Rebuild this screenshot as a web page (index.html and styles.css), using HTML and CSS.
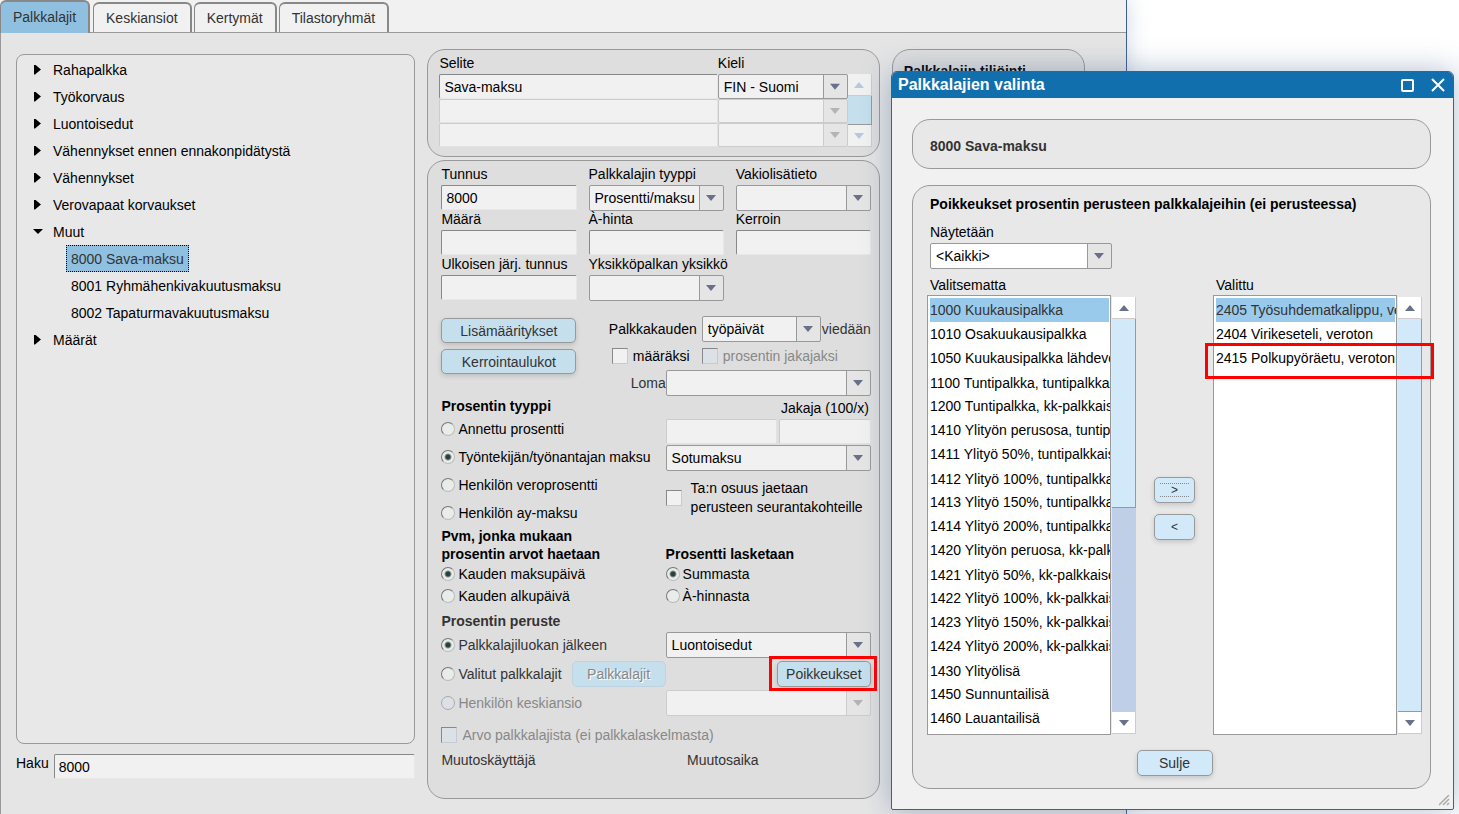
FILE: index.html
```html
<!DOCTYPE html>
<html lang="fi">
  <head>
    <meta charset="UTF-8" />
    <meta name="viewport" content="width=device-width, initial-scale=1.0" />
    <title>Palkkalajit</title>
    <link rel="stylesheet" href="styles.css">
  </head>
  <body>
    <main class="window">
      <nav class="tabs">
        <button class="tab active">Palkkalajit</button>
        <button class="tab">Keskiansiot</button>
        <button class="tab">Kertymät</button>
        <button class="tab">Tilastoryhmät</button>
      </nav>

      <div class="content">
        <section class="tree-col">
          <ul class="tree">
            <li><button class="node">Rahapalkka</button></li>
            <li><button class="node">Työkorvaus</button></li>
            <li><button class="node">Luontoisedut</button></li>
            <li><button class="node">Vähennykset ennen ennakonpidätystä</button></li>
            <li><button class="node">Vähennykset</button></li>
            <li><button class="node">Verovapaat korvaukset</button></li>
            <li>
              <button class="node open">Muut</button>
              <ul>
                <li><button class="leaf selected">8000 Sava-maksu</button></li>
                <li><button class="leaf">8001 Ryhmähenkivakuutusmaksu</button></li>
                <li><button class="leaf">8002 Tapaturmavakuutusmaksu</button></li>
              </ul>
            </li>
            <li><button class="node">Määrät</button></li>
          </ul>
          <div class="search">
            <label for="haku">Haku</label>
            <input type="text" id="haku" value="8000" />
          </div>
        </section>

        <section class="form-col">
          <div class="panel names">
            <label for="selite1">Selite</label>
            <label for="kieli1">Kieli</label>
            <span></span>
            <input type="text" id="selite1" value="Sava-maksu" />
            <select id="kieli1"><option>FIN - Suomi</option></select>
            <div class="scrollbar off">
              <button class="up" aria-label="Ylös" disabled></button>
              <div class="thumb"></div>
              <button class="down" aria-label="Alas" disabled></button>
            </div>
            <input type="text" aria-label="Selite 2" disabled />
            <select aria-label="Kieli 2" disabled></select>
            <input type="text" aria-label="Selite 3" disabled />
            <select aria-label="Kieli 3" disabled></select>
          </div>

          <form class="panel details">
            <div class="fields">
              <div class="field">
                <label for="tunnus">Tunnus</label>
                <input type="text" id="tunnus" value="8000" />
              </div>
              <div class="field">
                <label for="tyyppi">Palkkalajin tyyppi</label>
                <select id="tyyppi"><option>Prosentti/maksu</option></select>
              </div>
              <div class="field">
                <label for="vakio">Vakiolisätieto</label>
                <select id="vakio"></select>
              </div>
              <div class="field">
                <label for="maara">Määrä</label>
                <input type="text" id="maara" />
              </div>
              <div class="field">
                <label for="ahinta">À-hinta</label>
                <input type="text" id="ahinta" />
              </div>
              <div class="field">
                <label for="kerroin">Kerroin</label>
                <input type="text" id="kerroin" />
              </div>
              <div class="field">
                <label for="ulkoinen">Ulkoisen järj. tunnus</label>
                <input type="text" id="ulkoinen" />
              </div>
              <div class="field">
                <label for="yksikko">Yksikköpalkan yksikkö</label>
                <select id="yksikko"></select>
              </div>
            </div>

            <div class="period">
              <div class="actions">
                <button type="button" class="btn">Lisämääritykset</button>
                <button type="button" class="btn">Kerrointaulukot</button>
              </div>
              <div class="period-fields">
                <label for="kausi">Palkkakauden</label>
                <div class="line">
                  <select id="kausi"><option>työpäivät</option></select>
                  <span class="soft">viedään</span>
                </div>
                <label class="check"><input type="checkbox" /> määräksi</label>
                <label class="check muted"><input type="checkbox" disabled /> prosentin jakajaksi</label>
              </div>
              <div class="loma">
                <label class="soft" for="loma">Loma</label>
                <select id="loma"></select>
              </div>
            </div>

            <div class="halves">
              <fieldset>
                <legend>Prosentin tyyppi</legend>
                <label class="radio tall"><input type="radio" name="ptyyppi" />Annettu prosentti</label>
                <label class="radio tall"><input type="radio" name="ptyyppi" checked />Työntekijän/työnantajan maksu</label>
                <label class="radio tall"><input type="radio" name="ptyyppi" />Henkilön veroprosentti</label>
                <label class="radio tall"><input type="radio" name="ptyyppi" />Henkilön ay-maksu</label>
              </fieldset>
              <div class="percent">
                <label class="divider-label" for="jakaja">Jakaja (100/x)</label>
                <div class="pair">
                  <input type="text" aria-label="Prosentti" disabled />
                  <input type="text" id="jakaja" disabled />
                </div>
                <select aria-label="Maksu"><option>Sotumaksu</option></select>
                <label class="check share">
                  <input type="checkbox" />
                  <span>Ta:n osuus jaetaan<br>perusteen seurantakohteille</span>
                </label>
              </div>

              <fieldset>
                <legend>Pvm, jonka mukaan<br>prosentin arvot haetaan</legend>
                <label class="radio"><input type="radio" name="pvm" checked />Kauden maksupäivä</label>
                <label class="radio"><input type="radio" name="pvm" />Kauden alkupäivä</label>
              </fieldset>
              <fieldset class="bottom">
                <legend>Prosentti lasketaan</legend>
                <label class="radio"><input type="radio" name="laskenta" checked />Summasta</label>
                <label class="radio"><input type="radio" name="laskenta" />À-hinnasta</label>
              </fieldset>
            </div>

            <h3 class="soft">Prosentin peruste</h3>
            <div class="halves basis">
              <label class="radio soft"><input type="radio" name="peruste" checked />Palkkalajiluokan jälkeen</label>
              <select aria-label="Palkkalajiluokka"><option>Luontoisedut</option></select>
              <div class="line">
                <label class="radio soft"><input type="radio" name="peruste" />Valitut palkkalajit</label>
                <button type="button" class="btn" disabled>Palkkalajit</button>
              </div>
              <span class="marked"><button type="button" class="btn">Poikkeukset</button></span>
              <label class="radio muted"><input type="radio" name="peruste" disabled />Henkilön keskiansio</label>
              <select aria-label="Keskiansio" disabled></select>
            </div>

            <label class="check muted value-check"><input type="checkbox" disabled /> Arvo palkkalajista (ei palkkalaskelmasta)</label>
            <div class="changes soft">
              <span>Muutoskäyttäjä</span>
              <span>Muutosaika</span>
            </div>
          </form>
        </section>

        <section class="panel posting">
          <h3>Palkkalajin tiliöinti</h3>
        </section>
      </div>
    </main>

    <div class="dialog" role="dialog" aria-labelledby="dialog-title">
      <header class="titlebar">
        <h2 id="dialog-title">Palkkalajien valinta</h2>
        <button aria-label="Suurenna">
          <svg width="14" height="14" viewBox="0 0 14 14"><rect x="2" y="2" width="11" height="11" rx="1" fill="none" stroke="#fff" stroke-width="2" /></svg>
        </button>
        <button aria-label="Sulje ikkuna">
          <svg width="14" height="14" viewBox="0 0 14 14"><path d="M1 1l12 12M13 1L1 13" stroke="#fff" stroke-width="2" /></svg>
        </button>
      </header>

      <div class="dialog-body">
        <h3 class="box current soft">8000 Sava-maksu</h3>
        <div class="box picker">
          <h3>Poikkeukset prosentin perusteen palkkalajeihin (ei perusteessa)</h3>
          <label class="picker-label" for="naytetaan">Näytetään</label>
          <select id="naytetaan" class="filter"><option>&lt;Kaikki&gt;</option></select>

          <div class="lists">
            <label for="valitsematta">Valitsematta</label>
            <span></span>
            <label for="valittu">Valittu</label>

            <div class="list">
              <select id="valitsematta" multiple size="18">
                <option selected>1000 Kuukausipalkka</option>
                <option>1010 Osakuukausipalkka</option>
                <option>1050 Kuukausipalkka lähdevero</option>
                <option>1100 Tuntipalkka, tuntipalkkaiset</option>
                <option>1200 Tuntipalkka, kk-palkkaiset</option>
                <option>1410 Ylityön perusosa, tuntipalkkaiset</option>
                <option>1411 Ylityö 50%, tuntipalkkaiset</option>
                <option>1412 Ylityö 100%, tuntipalkkaiset</option>
                <option>1413 Ylityö 150%, tuntipalkkaiset</option>
                <option>1414 Ylityö 200%, tuntipalkkaiset</option>
                <option>1420 Ylityön peruosa, kk-palkkaiset</option>
                <option>1421 Ylityö 50%, kk-palkkaiset</option>
                <option>1422 Ylityö 100%, kk-palkkaiset</option>
                <option>1423 Ylityö 150%, kk-palkkaiset</option>
                <option>1424 Ylityö 200%, kk-palkkaiset</option>
                <option>1430 Ylityölisä</option>
                <option>1450 Sunnuntailisä</option>
                <option>1460 Lauantailisä</option>
              </select>
              <div class="scrollbar">
                <button class="up" aria-label="Ylös"></button>
                <div class="thumb half"></div>
                <button class="down" aria-label="Alas"></button>
              </div>
            </div>

            <div class="movers">
              <button class="btn focused" aria-label="Lisää"><span>&gt;</span></button>
              <button class="btn" aria-label="Poista"><span>&lt;</span></button>
            </div>

            <div class="list">
              <select id="valittu" multiple size="18">
                <option selected>2405 Työsuhdematkalippu, veroton</option>
                <option>2404 Virikeseteli, veroton</option>
                <option>2415 Polkupyöräetu, veroton</option>
              </select>
              <div class="scrollbar">
                <button class="up" aria-label="Ylös"></button>
                <div class="thumb"></div>
                <button class="down" aria-label="Alas"></button>
              </div>
              <div class="row-mark"></div>
            </div>
          </div>

          <button class="btn close-btn">Sulje</button>
        </div>
      </div>
      <svg class="grip" width="11" height="11" viewBox="0 0 11 11"><path d="M0 10L10 0M4 10L10 4M8 10L10 8" stroke="#aaa" stroke-width="1.5" /></svg>
    </div>
  </body>
</html>
```
FILE: styles.css
```css
* {
  box-sizing: border-box;
}
body {
  margin: 0;
  height: 100vh;
  overflow: hidden;
  position: relative;
  background-color: white;
  color: black;
  font-family: "Liberation Sans", Arial, sans-serif;
  font-size: 14px;
  line-height: 18px;
}
button,
input,
select {
  font: inherit;
  color: inherit;
  margin: 0;
}
h2,
h3,
ul,
fieldset,
legend {
  margin: 0;
  padding: 0;
  border: none;
  font-size: 14px;
}
h3,
legend {
  font-weight: bold;
}
ul {
  list-style: none;
}
.soft {
  color: #333;
}
.muted {
  color: #888;
}

/* main window */
.window {
  display: flex;
  flex-direction: column;
  width: calc(100% - 332px);
  height: 100vh;
  border-right: 1px solid #3f608f;
  background-color: #e5e5e5;
  box-shadow: 0 0 20px rgba(63, 96, 143, 0.25);
}
.tabs {
  display: flex;
  align-items: flex-end;
  gap: 2px;
  height: 33px;
  background-color: #f1f1f1;
  border-bottom: 1px solid #999;
}
.tab {
  height: 30px;
  padding: 0 12px;
  border: 2px solid #888;
  border-width: 2px 2px 0 1px;
  border-radius: 6px 6px 0 0;
  background-color: #f1f1f1;
  color: #333;
}
.tab.active {
  height: 33px;
  margin-right: 1px;
  margin-bottom: -1px;
  padding-bottom: 2px;
  background-color: #90c0e0;
}
.content {
  flex: 1;
  display: grid;
  grid-template-columns: 399fr 452fr 193fr;
  gap: 12px;
  align-items: start;
  min-height: 0;
  padding: 16px 41px 0 15px;
  border-left: 1px solid #999;
}

/* tree */
.tree-col {
  display: flex;
  flex-direction: column;
  height: 100%;
  padding: 5px 0 35px;
}
.tree {
  flex: 1;
  padding: 1px 0 0 16px;
  border: 1px solid #999;
  border-radius: 8px;
  background-color: #e8e8e8;
}
.tree li ul {
  padding-left: 33px;
}
.node,
.leaf {
  display: flex;
  align-items: center;
  height: 27px;
  padding: 0;
  border: none;
  background: none;
}
.node::before {
  content: "";
  width: 7px;
  height: 10px;
  margin: 0 12px 0 1px;
  background-color: black;
  clip-path: polygon(0 0, 1px 0, 100% 50%, 1px 100%, 0 100%);
}
.node.open::before {
  width: 10px;
  height: 5px;
  margin: 0 10px 0 0;
  clip-path: polygon(0 0, 100% 0, 50% 100%);
}
.leaf {
  padding: 0 4px;
  border: 1px solid transparent;
}
.leaf.selected {
  border: 1px dotted black;
  background-color: #90c0e0;
  color: #333;
}
.search {
  display: flex;
  gap: 5px;
  margin-top: 10px;
}
.search input {
  flex: 1;
}

/* controls */
input[type="text"] {
  width: 100%;
  min-width: 0;
  height: 25px;
  padding: 0 4px;
  border: 1px solid #e8e8e8;
  border-top-color: #888;
  border-left-color: #888;
  border-radius: 2px;
  background-color: #f1f1f1;
}
input[type="text"]:disabled {
  border-color: #ccc #e2e2e2 #e2e2e2 #ccc;
}
select {
  width: 100%;
  min-width: 0;
  height: 26px;
  padding: 0 25px 0 5px;
  border: 1px solid #999;
  border-radius: 2px;
  appearance: none;
  background: #f1f1f1 url("data:image/svg+xml,%3Csvg xmlns='http://www.w3.org/2000/svg' width='24' height='24'%3E%3Cpath fill='%23e5e5e5' d='M0 0h24v24H0z'/%3E%3Cpath fill='%23999' d='M0 0h1v24H0z'/%3E%3Cpath fill='%23697089' d='M7 9h10l-5 6z'/%3E%3C/svg%3E") right center no-repeat;
}
select:disabled {
  border-color: #ccc;
  opacity: 1;
  background-image: url("data:image/svg+xml,%3Csvg xmlns='http://www.w3.org/2000/svg' width='24' height='24'%3E%3Cpath fill='%23e5e5e5' d='M0 0h24v24H0z'/%3E%3Cpath fill='%23ccc' d='M0 0h1v24H0z'/%3E%3Cpath fill='%23b4b4b4' d='M7 9h10l-5 6z'/%3E%3C/svg%3E");
}
input[type="checkbox"] {
  appearance: none;
  flex: none;
  width: 16px;
  height: 16px;
  border: 1px solid #c4ccd2;
  border-top-color: #888;
  border-left-color: #888;
  background-color: #f1f1f1;
}
input[type="checkbox"]:disabled {
  background-color: #dce1e8;
}
input[type="radio"] {
  appearance: none;
  flex: none;
  width: 14px;
  height: 14px;
  border: 1px solid #bbb;
  border-top-color: #777;
  border-left-color: #777;
  border-radius: 50%;
  background-color: #e9edea;
}
input[type="radio"]:checked {
  background-image: radial-gradient(circle, #29403f 2px, transparent 4px);
}
input[type="radio"]:disabled {
  border-color: #aaa;
  background-color: #dce1e8;
}
.radio,
.check {
  display: flex;
  align-items: center;
  gap: 3px;
  height: 22px;
  white-space: nowrap;
}
.radio.tall {
  height: 28px;
}
.check {
  gap: 5px;
}
.btn {
  height: 26px;
  padding: 0 8px;
  border: 1px solid #999;
  border-radius: 5px;
  background-color: #c6dfed;
  color: #333;
  box-shadow: 0 2px 5px rgba(0, 0, 0, 0.15);
}
.btn:disabled {
  border-color: #bdd3e0;
  color: #888;
  text-shadow: 1px 1px 0 white;
  box-shadow: none;
}
.line {
  display: flex;
  align-items: center;
}

/* scrollbars */
.scrollbar {
  display: flex;
  flex-direction: column;
  width: 24px;
  background-color: #bfcfe8;
}
.scrollbar button {
  display: flex;
  align-items: center;
  justify-content: center;
  height: 22px;
  padding: 0;
  border: 1px solid #ccc;
  border-width: 0 1px 1px 0;
  background-color: white;
}
.scrollbar button::before {
  content: "";
  border: 5px solid transparent;
}
.scrollbar .up::before {
  border-top-width: 0;
  border-bottom: 6px solid #697089;
}
.scrollbar .down::before {
  border-bottom-width: 0;
  border-top: 6px solid #697089;
}
.scrollbar .thumb {
  flex: 1;
  border: 1px solid #999;
  border-width: 0 1px 1px 0;
  background-color: #d2e9f9;
}
.scrollbar .thumb.half {
  flex: none;
  height: 189px;
  margin-bottom: auto;
}
.scrollbar.off button {
  background-color: #f1f1f1;
}
.scrollbar.off .thumb {
  background-color: #c6dfed;
}
.scrollbar.off .up::before {
  border-bottom-color: #b8c8e0;
}
.scrollbar.off .down::before {
  border-top-color: #b8c8e0;
}

/* form */
.panel {
  border: 1px solid #999;
  border-radius: 18px;
  background-color: #dedede;
}
.form-col {
  display: flex;
  flex-direction: column;
  gap: 3px;
  min-width: 0;
}
.names {
  display: grid;
  grid-template-columns: 1fr 130px 24px;
  grid-template-rows: 20px 25px 24px 24px;
  padding: 4px 7px 9px 11px;
}
.names input,
.names select {
  height: auto;
}
.names .scrollbar {
  grid-row: 2 / 5;
  grid-column: 3;
}
.details {
  padding: 4px 8px 29px 13px;
}
.fields {
  display: grid;
  grid-template-columns: repeat(3, 1fr);
  column-gap: 12px;
}
.field {
  height: 45px;
  min-width: 0;
}
.field label {
  display: block;
  height: 20px;
  white-space: nowrap;
}
.period {
  display: grid;
  grid-template-columns: 135px auto;
  justify-content: space-between;
  padding-top: 16px;
}
.actions {
  display: grid;
  grid-row: 1 / 3;
  align-content: start;
  gap: 6px;
  padding-top: 2px;
}
.actions .btn {
  height: 25px;
}
.period-fields {
  display: grid;
  grid-template-columns: auto auto;
  grid-template-rows: 26px 28px;
  align-items: center;
  column-gap: 5px;
}
.period-fields .check {
  justify-self: start;
}
.period-fields .check:nth-of-type(2) {
  padding-left: 3px;
}
.period-fields select {
  width: 119px;
}
.period-fields .line {
  gap: 1px;
}
.loma {
  display: flex;
  align-items: center;
  justify-self: end;
}
.loma select {
  width: 205px;
}
.halves {
  display: grid;
  grid-template-columns: 224fr 205fr;
  padding-top: 1px;
}
.halves > * {
  min-width: 0;
}
.divider-label {
  display: block;
  height: 22px;
  padding: 2px 2px 0 0;
  text-align: right;
}
.pair {
  display: grid;
  grid-template-columns: 111fr 92fr;
  gap: 2px;
  margin-bottom: 1px;
}
.check.share {
  gap: 9px;
  height: auto;
  margin-top: 8px;
  line-height: 19px;
}
.bottom legend {
  padding-top: 18px;
}
.basis {
  row-gap: 3px;
  align-items: center;
  padding-top: 2px;
}
h3.soft {
  padding-top: 5px;
}
.basis .line {
  gap: 10px;
}
.basis .btn {
  width: 94px;
}
.marked {
  position: relative;
  justify-self: end;
}
.marked::after {
  content: "";
  position: absolute;
  inset: -5px -6px -4px -8px;
  border: 3px solid red;
}
.value-check {
  margin-top: 8px;
}
.changes {
  display: grid;
  grid-template-columns: 246fr 184fr;
  padding-top: 5px;
}
.posting {
  height: 100px;
  padding: 12px 11px;
}

/* dialog */
.dialog {
  position: absolute;
  top: 71px;
  right: 5px;
  width: 563px;
  border: 1px solid #3f608f;
  border-radius: 6px 6px 2px 2px;
  background-color: #f1f1f1;
  box-shadow: 0 0 30px rgba(63, 96, 143, 0.4);
}
.titlebar {
  display: flex;
  align-items: center;
  gap: 17px;
  height: 26px;
  padding: 0 8px 0 6px;
  border-radius: 5px 5px 0 0;
  background-color: #116fae;
  color: white;
}
.titlebar h2 {
  flex: 1;
  font-size: 16px;
}
.titlebar button {
  display: flex;
  padding: 0;
  border: none;
  background: none;
}
.dialog-body {
  padding: 21px 22px 20px 20px;
}
.box {
  border: 1px solid #999;
  border-radius: 18px;
  background-color: #e8e8e8;
}
h3.current {
  margin-bottom: 16px;
  padding: 17px 17px 13px;
}
.picker {
  padding: 9px 8px 12px 14px;
}
.picker h3 {
  padding-left: 3px;
}
.picker-label {
  display: block;
  padding: 10px 0 2px 3px;
}
.picker .filter {
  display: block;
  width: 182px;
  margin-left: 3px;
  background-color: white;
}
.lists {
  display: grid;
  grid-template-columns: 209px 1fr 209px;
  grid-template-rows: 19px auto;
  padding-top: 7px;
}
.lists label {
  padding-left: 3px;
}
.list {
  position: relative;
  display: flex;
  gap: 1px;
}
.list select {
  flex: 1;
  height: 440px;
  padding: 2px 1px 0 2px;
  overflow: hidden;
  border-radius: 0;
  background: white;
  scrollbar-width: none;
}
.list option {
  min-height: 24px;
  padding: 4px 0 0;
}
.list option:nth-child(4n) {
  padding-top: 5px;
}
.list option:checked {
  background: #99caec linear-gradient(#99caec, #99caec);
  color: #333;
}
.list .scrollbar {
  margin: 2px 0 1px;
}
.row-mark {
  position: absolute;
  top: 48px;
  left: -8px;
  right: -12px;
  height: 36px;
  border: 3px solid red;
}
.movers {
  display: grid;
  align-content: center;
  justify-content: center;
  gap: 11px;
  padding-bottom: 14px;
}
.movers .btn {
  width: 41px;
  padding: 5px;
}
.movers span {
  display: block;
  font-size: 12px;
  line-height: 12px;
}
.movers .focused span {
  border: 1px dotted #888;
  border-width: 1px 0;
}
.picker .btn {
  background-color: #d2e9f9;
}
.close-btn {
  display: block;
  width: 76px;
  margin: 15px auto 0;
}
.grip {
  position: absolute;
  right: 3px;
  bottom: 3px;
}
```
